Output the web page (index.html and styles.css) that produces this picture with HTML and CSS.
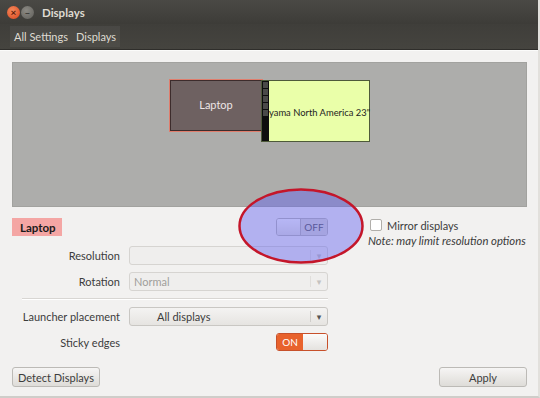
FILE: index.html
```html
<!DOCTYPE html>
<html>
<head>
  <title>Displays</title>
  <link rel="stylesheet" href="styles.css">
</head>
<body>
  <div class="window">
    <div class="titlebar">
      <span class="btn-close">×</span>
      <span class="btn-min">–</span>
      <span class="title">Displays</span>
    </div>
    <div class="menubar">
      <div class="crumbs">
        <span>All Settings</span>
        <span>Displays</span>
      </div>
    </div>

    <div class="content">
      <div class="canvas">
        <div class="monitor laptop">Laptop</div>
        <div class="monitor external">
          <div class="strip"><i></i><i></i><i></i><i></i><i></i></div>
          <span>yama North America 23"</span>
        </div>
      </div>

      <div class="form">
        <div class="row head">
          <span class="screen-name">Laptop</span>
          <div class="switch off"><span class="knob"></span><span class="state">OFF</span></div>
          <div class="mirror">
            <label><span class="check"></span>Mirror displays</label>
            <em>Note: may limit resolution options</em>
          </div>
        </div>
        <div class="row">
          <span class="label">Resolution</span>
          <div class="combo disabled"><span></span><b>▾</b></div>
        </div>
        <div class="row tall">
          <span class="label">Rotation</span>
          <div class="combo disabled"><span>Normal</span><b>▾</b></div>
        </div>
        <div class="sep"></div>
        <div class="row">
          <span class="label">Launcher placement</span>
          <div class="combo"><span class="centered">All displays</span><b>▾</b></div>
        </div>
        <div class="row">
          <span class="label">Sticky edges</span>
          <div class="switch on"><span class="state">ON</span><span class="knob"></span></div>
        </div>
      </div>

      <div class="buttons">
        <button>Detect Displays</button>
        <button class="apply">Apply</button>
      </div>
    </div>

    <svg class="highlight" width="130" height="80" viewBox="0 0 130 80">
      <ellipse cx="64" cy="39" rx="61.5" ry="36.5" fill="rgba(95,95,240,0.44)" stroke="#c4162a" stroke-width="2.5"/>
    </svg>
  </div>
</body>
</html>
```

FILE: styles.css
```css
body {
  margin: 0;
  font-family: Lato, "DejaVu Sans", sans-serif;
  font-size: 11px;
  color: #3c3c3c;
}

.window {
  position: relative;
  width: 540px;
  height: 398px;
  background: #f2f1f0;
  display: flex;
  flex-direction: column;
  overflow: hidden;
  border-right: 2px solid #e2e0dc;
  border-bottom: 2px solid #cfcdc9;
  box-sizing: border-box;
}

/* title + menu */
.titlebar {
  height: 24px;
  background: linear-gradient(#4a4945, #3d3c38);
  display: flex;
  align-items: center;
  padding-left: 7px;
  color: #dfdbd2;
}
.btn-close, .btn-min {
  width: 13px;
  height: 13px;
  border-radius: 50%;
  font-size: 10px;
  line-height: 13px;
  text-align: center;
  font-weight: bold;
}
.btn-close {
  background: radial-gradient(circle at 40% 35%, #f58a5c, #d9431c);
  color: #5a1a0a;
  z-index: 1;
}
.btn-min {
  background: radial-gradient(circle at 40% 35%, #8c8a84, #5f5e5a);
  color: #3a3935;
  margin-left: 1px;
}
.title {
  font-weight: bold;
  font-size: 11.5px;
  margin-left: 8px;
}

.menubar {
  height: 25px;
  background: linear-gradient(#3f3e3a, #45443f);
  border-bottom: 1px solid #2f2e2b;
  display: flex;
  align-items: center;
  padding-left: 10px;
}
.crumbs {
  display: flex;
  gap: 8px;
  padding: 4px 4px;
  background: rgba(255, 255, 255, 0.05);
  color: #dfdbd2;
  font-size: 11px;
}

.content {
  flex: 1;
  padding: 11px 11px 0 12px;
  display: flex;
  flex-direction: column;
  border-top: 1px solid #fbfbfa;
}

/* monitor canvas */
.canvas {
  position: relative;
  height: 145px;
  background: #adadab;
  box-shadow: inset 0 0 0 1px #a2a29f;
}
.monitor {
  position: absolute;
  box-sizing: border-box;
  display: flex;
  align-items: center;
  justify-content: center;
  white-space: nowrap;
}
.laptop {
  left: 158px;
  top: 18px;
  width: 92px;
  height: 51px;
  background: #6e6161;
  border: 1px solid #3d2c2c;
  box-shadow: 0 0 0 1px #e07d6c;
  color: #ede6e6;
  font-size: 11px;
  padding-bottom: 2px;
}
.external {
  left: 249px;
  top: 18px;
  width: 109px;
  height: 62px;
  background: #eaffa9;
  border: 1px solid #4e5a3a;
  color: #1e1e1e;
  font-size: 9.4px;
  justify-content: flex-start;
  padding-left: 7px;
  padding-top: 3px;
}
.strip {
  position: absolute;
  left: 0;
  top: 0;
  bottom: 0;
  width: 7px;
  background: #0e0e0e;
  display: flex;
  flex-direction: column;
  gap: 1px;
  padding-top: 1px;
  align-items: center;
}
.strip i {
  width: 5px;
  height: 6px;
  background: #4a4a48;
}

/* form */
.form {
  display: flex;
  flex-direction: column;
  margin-top: 11px;
}
.row {
  display: flex;
  align-items: center;
  height: 26px;
  white-space: nowrap;
}
.row.tall {
  height: 27px;
}
.row.head {
  height: 22px;
  align-items: flex-start;
  margin-bottom: 2px;
}
.screen-name {
  background: #f4a6a4;
  color: #1a1a1a;
  font-weight: bold;
  font-size: 11.5px;
  padding: 2px 7px 1px 8px;
  height: 15px;
  line-height: 15px;
  width: 35px;
  flex-shrink: 0;
  margin-right: 214px;
}
.label {
  width: 108px;
  text-align: right;
  margin-right: 9px;
  color: #3c3c3c;
  flex-shrink: 0;
}
.combo {
  width: 199px;
  height: 19px;
  flex-shrink: 0;
  box-sizing: border-box;
  border: 1px solid #c9c7c3;
  border-radius: 3px;
  background: linear-gradient(#f4f3f2, #e6e4e1);
  display: flex;
  align-items: center;
  padding-left: 4px;
  color: #3c3c3c;
}
.combo span {
  flex: 1;
}
.combo .centered {
  padding-left: 23px;
}
.combo b {
  width: 16px;
  border-left: 1px solid #d0cecb;
  text-align: center;
  font-size: 9px;
  color: #555;
  font-weight: normal;
}
.combo.disabled {
  background: #efeeed;
  border-color: #d6d4d1;
  color: #a09e9b;
}
.combo.disabled b {
  color: #c4c2bf;
  border-color: #e0dedb;
}
.sep {
  height: 1px;
  background: #d8d6d3;
  margin: 3px 0 4px 10px;
  width: 306px;
  box-shadow: 0 1px 0 #fff;
}

.switch {
  width: 52px;
  height: 18px;
  flex-shrink: 0;
  box-sizing: border-box;
  border: 1px solid #bab8b4;
  border-radius: 3px;
  display: flex;
  overflow: hidden;
  font-size: 10px;
  margin-left: 147px;
}
.row.head .switch {
  margin-left: 0;
}
.switch .knob {
  flex: 1;
  background: linear-gradient(#fbfbfa, #e4e2df);
}
.switch .state {
  width: 26px;
  display: flex;
  align-items: center;
  justify-content: center;
}
.switch.off .state {
  background: #dcdad6;
  color: #555;
  border-left: 1px solid #bab8b4;
}
.switch.on {
  border-color: #c7502a;
}
.switch.on .state {
  background: #e8622c;
  color: #fff;
}

.mirror {
  margin-left: 42px;
  display: flex;
  flex-direction: column;
}
.mirror label {
  display: flex;
  align-items: center;
  font-size: 11px;
  height: 14px;
}
.check {
  width: 10px;
  height: 10px;
  border: 1px solid #b0aeaa;
  background: #fff;
  border-radius: 2px;
  margin-right: 5px;
}
.mirror em {
  margin-top: 2px;
  margin-left: -2px;
  font-size: 11.3px;
  color: #3a3a3a;
}

.buttons {
  display: flex;
  justify-content: space-between;
  margin-top: 12px;
}
button {
  font-family: inherit;
  font-size: 11px;
  color: #3c3c3c;
  height: 20px;
  width: 88px;
  padding: 0;
  border: 1px solid #bcbab6;
  border-radius: 3px;
  background: linear-gradient(#f6f5f4, #dedcd8);
}

.highlight {
  position: absolute;
  left: 237px;
  top: 187px;
}
```
